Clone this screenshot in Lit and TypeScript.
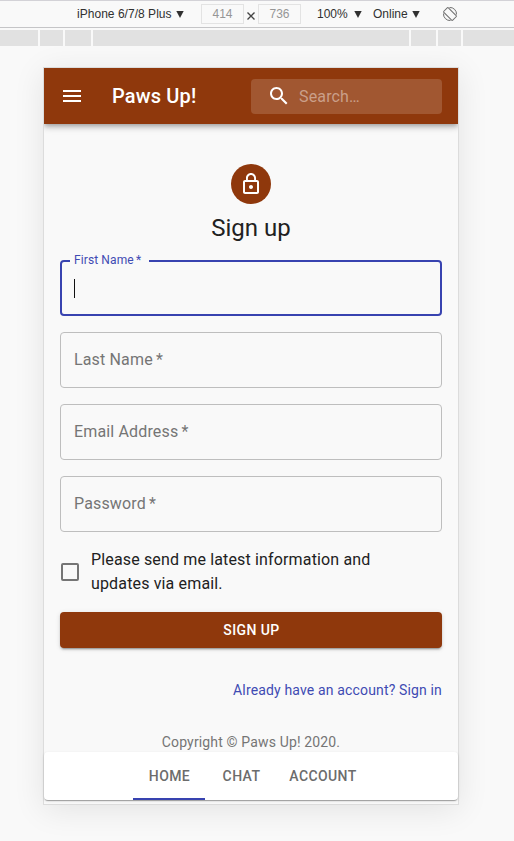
import { LitElement, html, css } from "lit";
import { customElement, property } from "lit/decorators.js";

@customElement("outlined-field")
class OutlinedField extends LitElement {
  @property() label = "";
  @property({ type: Boolean, reflect: true }) active = false;

  static styles = css`
    :host { display: block; }
    .field {
      box-sizing: border-box; height: 56px; position: relative;
      display: flex; align-items: center; padding: 0 13px;
      border: 1px solid #bebebe; border-radius: 4px;
      font-size: 16px; letter-spacing: 0.15px; color: #757575;
    }
    .label { padding-bottom: 2px; }
    .star { margin-left: -1px; }
    :host([active]) .field { border: 2px solid #3843b0; padding: 0 12px; }
    .notch {
      position: absolute; left: 8px; top: -9px; width: 79px; box-sizing: border-box;
      padding-left: 4px; background: #f9f9f9; color: #3f4bb3;
      font-size: 12px; line-height: 14px; letter-spacing: 0.11px; white-space: nowrap;
    }
    .caret { width: 1px; height: 19px; background: #111; }
  `;

  render() {
    const text = html`${this.label} <span class="star">*</span>`;
    return html`<div class="field">
      ${this.active
        ? html`<span class="notch">${text}</span><span class="caret"></span>`
        : html`<span class="label">${text}</span>`}
    </div>`;
  }
}

@customElement("device-toolbar")
class DeviceToolbar extends LitElement {
  static styles = css`
    :host { display: block; font-family: "Liberation Sans", Arial, sans-serif; font-size: 12px; color: #303030; }
    .bar {
      box-sizing: border-box; height: 28px; display: flex; align-items: center;
      border-top: 1px solid #d3d2d7; border-bottom: 1px solid #c5c5c7;
      padding-left: 77px; white-space: nowrap; background: #f9f9f9;
    }
    .arrow { width: 8px; height: 7px; fill: #303030; margin-left: 5px; }
    .size {
      box-sizing: border-box; width: 43px; height: 20px; line-height: 18px;
      border: 1px solid #e3e3e3; text-align: center; color: #969696;
    }
    .device { width: 94px; letter-spacing: 0.03px; }
    .first { margin-left: 17px; }
    .times { width: 14px; display: flex; justify-content: center; padding-top: 4px; }
    .times svg { width: 8px; height: 8px; stroke: #444; stroke-width: 1.4; }
    .zoom { width: 32px; margin-left: 16px; }
    .net { width: 34px; margin-left: 11px; }
    .rotate { width: 16px; height: 16px; margin-left: 22px; fill: none; stroke: #6e6e6e; }
    .queries { display: flex; gap: 2px; height: 16px; margin-top: 2px; }
    .queries i { background: #e1e1e1; }
    .a { width: 38px; } .b { width: 23px; } .c { width: 26px; }
    .d { width: 316px; } .e { width: 25px; } .f { width: 23px; } .g { flex: 1; }
  `;

  arrow = () => html`<svg class="arrow" viewBox="0 0 8 7"><path d="M.3 0h7.4L4 7z" /></svg>`;

  render() {
    return html`
      <div class="bar">
        <span class="device">iPhone 6/7/8 Plus</span>${this.arrow()}
        <span class="size first">414</span>
        <span class="times"><svg viewBox="0 0 8 8"><path d="M.5.5l7 7m0-7l-7 7" /></svg></span>
        <span class="size">736</span>
        <span class="zoom">100%</span>${this.arrow()}
        <span class="net">Online</span>${this.arrow()}
        <svg class="rotate" viewBox="0 0 16 16">
          <rect x="4.8" y="1.700" width="6.400" height="12.600" rx=".8" transform="rotate(-45 8 8)" />
          <path d="M7.500 1.500A6.500 6.500 0 0 1 14.500 8.500M8.500 14.500A6.500 6.500 0 0 1 1.500 7.500" />
        </svg>
      </div>
      <div class="queries">
        <i class="a"></i><i class="b"></i><i class="c"></i><i class="d"></i><i class="e"></i><i class="f"></i><i class="g"></i>
      </div>
    `;
  }
}

@customElement("app-root")
class AppRoot extends LitElement {
  static styles = css`
    :host {
      display: block; box-sizing: border-box; height: 841px; overflow: hidden;
      background: #f9f9f9; font-family: Roboto, sans-serif; color: #212121;
    }
    .screen {
      width: 414px; height: 736px; margin: 21px 0 0 43px;
      border: 1px solid #dcdcdc; background: #f9f9f9;
      box-shadow: 0 5px 30px rgba(0, 0, 0, 0.09);
      display: flex; flex-direction: column;
    }
    .appbar {
      height: 56px; flex: none; box-sizing: border-box; padding: 0 16px;
      display: flex; align-items: center; background: #8f380c; color: #fff;
      box-shadow: 0 2px 4px -1px rgba(0,0,0,.2), 0 4px 5px rgba(0,0,0,.14), 0 1px 10px rgba(0,0,0,.12);
      clip-path: inset(0 0 -16px 0);
    }
    .icon { width: 24px; height: 24px; fill: #fff; display: block; }
    h1 { margin: 0 0 0 28px; font-size: 20px; font-weight: 500; letter-spacing: 0.15px; flex: 1; }
    .search {
      box-sizing: border-box; width: 191px; height: 35px; padding-left: 16px; margin-top: 1px;
      display: flex; align-items: center; gap: 8px; border-radius: 4px;
      background: #a15731;
      font-size: 16px; letter-spacing: 0.15px; color: #ca9f89;
    }
    .search .icon { margin-top: -2px; }
    main { flex: 1; padding: 40px 16px 0; display: flex; flex-direction: column; align-items: stretch; }
    .avatar {
      width: 40px; height: 40px; border-radius: 50%; background: #8f380c; align-self: center;
      display: flex; align-items: center; justify-content: center;
    }
    h2 { margin: 8px 0 16px; font-size: 24px; line-height: 32px; font-weight: 400; text-align: center; }
    .fields { display: flex; flex-direction: column; gap: 16px; }
    .consent {
      display: flex; align-items: center; gap: 12px; margin-top: 16px; padding-left: 1px;
      font-size: 16px; line-height: 24px; letter-spacing: 0.15px;
    }
    .box { box-sizing: border-box; width: 18px; height: 18px; border: 2px solid #757575; border-radius: 2px; flex: none; }
    .submit {
      height: 36px; margin-top: 16px; padding: 0 0 0 1px; border: 0; border-radius: 4px; background: #8f380c; color: #fff;
      font: 500 14px/24px Roboto, sans-serif; letter-spacing: 0.4px;
      box-shadow: 0 3px 1px -2px rgba(0,0,0,.2), 0 2px 2px rgba(0,0,0,.14), 0 1px 5px rgba(0,0,0,.12);
    }
    .signin { margin-top: 32px; text-align: right; font-size: 14px; line-height: 20px; letter-spacing: 0.15px; color: #3f4bb3; }
    .copy { margin-top: 32px; text-align: center; font-size: 14px; line-height: 20px; letter-spacing: 0.15px; color: #757575; }
    nav {
      box-sizing: border-box; height: 48px; flex: none; margin-bottom: 4px; padding-right: 1px;
      display: flex; justify-content: center;
      background: #fff; border-radius: 4px;
      box-shadow: 0 2px 1px -1px rgba(0,0,0,.2), 0 1px 1px rgba(0,0,0,.14), 0 1px 3px rgba(0,0,0,.12);
    }
    .tab {
      box-sizing: border-box; width: 72px; height: 48px; padding: 2px 0 0 1px;
      display: flex; align-items: center; justify-content: center;
      border-bottom: 2px solid transparent;
      font-size: 14px; font-weight: 500; letter-spacing: 0.4px; color: #6c6c6c;
    }
    .tab.on { border-color: #3843b0; }
    .tab.wide { width: 91px; }
  `;

  render() {
    return html`
      <device-toolbar></device-toolbar>
      <div class="screen">
        <header class="appbar">
          <svg class="icon" viewBox="0 0 24 24"><path d="M3 18h18v-2H3v2zm0-5h18v-2H3v2zm0-7v2h18V6H3z" /></svg>
          <h1>Paws Up!</h1>
          <div class="search">
            <svg class="icon" viewBox="0 0 24 24"><path d="M15.5 14h-.79l-.28-.27C15.41 12.59 16 11.11 16 9.5 16 5.91 13.09 3 9.5 3S3 5.91 3 9.5 5.91 16 9.5 16c1.61 0 3.09-.59 4.23-1.57l.27.28v.79l5 4.99L20.49 19l-4.99-5zm-6 0C7.01 14 5 11.99 5 9.5S7.01 5 9.5 5 14 7.01 14 9.5 11.99 14 9.5 14z" /></svg>
            <span>Search…</span>
          </div>
        </header>
        <main>
          <div class="avatar">
            <svg class="icon" viewBox="0 0 24 24"><path d="M12 17c1.1 0 2-.9 2-2s-.9-2-2-2-2 .9-2 2 .9 2 2 2zm6-9h-1V6c0-2.76-2.24-5-5-5S7 3.24 7 6v2H6c-1.1 0-2 .9-2 2v10c0 1.1.9 2 2 2h12c1.1 0 2-.9 2-2V10c0-1.1-.9-2-2-2zM8.9 6c0-1.71 1.39-3.1 3.1-3.1s3.1 1.39 3.1 3.1v2H8.9V6zM18 20H6V10h12v10z" /></svg>
          </div>
          <h2>Sign up</h2>
          <div class="fields">
            <outlined-field active label="First Name"></outlined-field>
            <outlined-field label="Last Name"></outlined-field>
            <outlined-field label="Email Address"></outlined-field>
            <outlined-field label="Password"></outlined-field>
          </div>
          <div class="consent">
            <span class="box"></span>
            <span>Please send me latest information and<br />updates via email.</span>
          </div>
          <button class="submit">SIGN UP</button>
          <div class="signin">Already have an account? Sign in</div>
          <div class="copy">Copyright © Paws Up! 2020.</div>
        </main>
        <nav>
          <div class="tab on">HOME</div>
          <div class="tab">CHAT</div>
          <div class="tab wide">ACCOUNT</div>
        </nav>
      </div>
    `;
  }
}
